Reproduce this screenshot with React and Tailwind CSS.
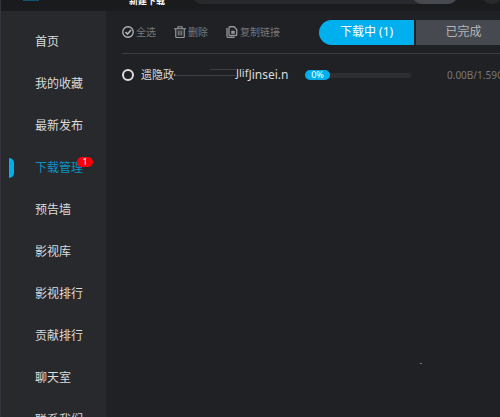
import { useState } from "react";

const menuItems = [
  "首页",
  "我的收藏",
  "最新发布",
  "下载管理",
  "预告墙",
  "影视库",
  "影视排行",
  "贡献排行",
  "聊天室",
  "联系我们",
];

const CheckIcon = () => (
  <svg className="w-3 h-3 shrink-0" viewBox="0 0 24 24" fill="none" stroke="currentColor" strokeWidth="2.6">
    <circle cx="12" cy="12" r="10.5" />
    <path d="M7 12l4 4 7-8" strokeWidth="3.2" />
  </svg>
);

const TrashIcon = () => (
  <svg className="w-3 h-3 shrink-0" viewBox="0 0 24 24" fill="none" stroke="currentColor" strokeWidth="2.4">
    <path d="M0 5.500h24M8 5V1.500h8V5M3.500 6v15q0 2 2 2h13q2 0 2-2V6" />
    <path d="M8.500 9v10M12 9v10M15.500 9v10" strokeWidth="1.800" />
  </svg>
);

const CopyIcon = () => (
  <svg className="w-3 h-3 shrink-0" viewBox="0 0 24 24" fill="none" stroke="currentColor" strokeWidth="2.6">
    <path d="M8 1.500h8l5.500 5.500v10q0 2-2 2H8q-2 0-2-2V3.500q0-2 2-2z" />
    <path d="M2 4v16q0 3 3 3h12" />
    <path d="M11 10h6v5h-6z" fill="currentColor" strokeWidth="1" />
  </svg>
);

const App = () => {
  const [activo, setActivo] = useState("下载管理");
  const [tab, setTab] = useState("downloading");
  const [checked, setChecked] = useState(false);
  const progress = 0;

  return (
    <div className="relative h-screen flex flex-col overflow-hidden bg-[#202124] border-l border-[#33343d] text-[#dcdcdc] font-['Noto_Sans','Noto_Sans_CJK_SC',sans-serif]">
      {/* Header */}
      <header className="h-[11px] shrink-0 flex items-end overflow-hidden bg-[#1a1b1d]">
        <span className="w-4 h-4 ml-[22px] mb-[10px] shrink-0 bg-[#11526e]" />
        <a
          href="#download"
          className="ml-[90px] mb-[5px] w-[34px] shrink-0 whitespace-nowrap text-[9px] leading-[10px] font-bold text-white"
        >
          新建下载
        </a>
        <div className="ml-7 mb-[7px] h-6 w-[268px] shrink-0 flex justify-end rounded-full bg-[#28292d]">
          <button aria-label="搜索" className="w-12 h-full rounded-full bg-[#474951]" />
        </div>
        <button aria-label="用户" className="ml-[21px] mb-[7px] w-6 h-6 shrink-0 rounded-full bg-[#28292d]" />
      </header>

      <div className="flex flex-1 min-h-0">
        {/* Menu lateral */}
        <nav className="w-[105px] shrink-0 pt-[10px] bg-[#28292d] overflow-hidden">
          {menuItems.map((item) => (
            <a
              key={item}
              href="#menu"
              onClick={() => setActivo(item)}
              className={`h-[42px] pl-2 flex items-center text-xs leading-4 ${
                activo === item ? "text-[#0a93c4]" : "text-[#dcdcdc]"
              }`}
            >
              <span
                className={`w-[5px] h-5 mr-[21px] rounded-r-md ${
                  activo === item ? "bg-[#00b0ee]" : ""
                }`}
              />
              <span className="relative whitespace-nowrap">
                {item}
                {item === "下载管理" && (
                  <span className="absolute -top-[3px] -right-[10px] w-4 h-[10px] rounded-full bg-[#f80008] text-white text-[9px] leading-[10px] text-center">
                    1
                  </span>
                )}
              </span>
            </a>
          ))}
        </nav>

        {/* Descargas */}
        <main className="flex-1 min-w-0 pl-4 overflow-hidden">
          <div className="h-[43px] flex items-center border-b border-[#3b3c40] whitespace-nowrap text-[10px] leading-4 text-[#77787a]">
            <button className="w-[52px] shrink-0 flex items-center gap-0.5">
              <span className="text-[#b4b5b7]"><CheckIcon /></span>
              全选
            </button>
            <button className="w-[52px] shrink-0 flex items-center gap-0.5">
              <span className="text-[#97989a]"><TrashIcon /></span>
              删除
            </button>
            <button className="w-[93px] shrink-0 flex items-center gap-0.5">
              <span className="text-[#97989a]"><CopyIcon /></span>
              复制链接
            </button>
            <div className="flex shrink-0 gap-0.5 text-xs">
              <button
                onClick={() => setTab("downloading")}
                className={`w-[95px] h-[25px] rounded-l-full ${
                  tab === "downloading" ? "bg-[#00b0ee] text-white" : "bg-[#474951] text-[#b5b6b9]"
                }`}
              >
                下载中 (1)
              </button>
              <button
                onClick={() => setTab("completed")}
                className={`w-[95px] h-[25px] rounded-r-full ${
                  tab === "completed" ? "bg-[#00b0ee] text-white" : "bg-[#474951] text-[#b5b6b9]"
                }`}
              >
                已完成
              </button>
            </div>
          </div>

          <div className="h-[42px] flex items-center whitespace-nowrap">
            <input
              id="task-1"
              type="checkbox"
              checked={checked}
              onChange={() => setChecked(!checked)}
              className="appearance-none w-3 h-3 shrink-0 rounded-full border-2 border-[#dcdcdc] checked:bg-[#00b0ee]"
            />
            <label htmlFor="task-1" className="ml-[7px] w-[164px] shrink-0 flex items-center text-xs leading-4 overflow-hidden">
              <span className="text-[11px]">遗隐政</span>
              <svg className="w-[62px] h-4 shrink-0" viewBox="0 0 62 16" fill="none" stroke="#3f4044">
                <path d="M-2 5l4 3-4 3z" fill="#8b8c8e" stroke="none" />
                <path d="M2 8.500h60M36 2.500h26" />
              </svg>
              <span className="pb-1 text-[11px]">Jlif</span>
              <span>Jinsei.n</span>
            </label>

            {/* Barra de progreso */}
            <div className="w-[106px] h-[5px] shrink-0 flex items-center rounded-full bg-[#2d2e31]">
              <div
                className="min-w-[25px] h-[10px] rounded-full bg-[#00b0ee] text-white text-[9px] leading-[10px] text-center"
                style={{ width: `${progress}%` }}
              >
                {progress}%
              </div>
            </div>
            <span className="ml-9 shrink-0 text-[10px] leading-4 text-[#77787a]">0.00B/1.59GB</span>
          </div>
        </main>
      </div>

      <span className="absolute left-[84%] top-[87%] w-0.5 h-px bg-[#77787a]" />
    </div>
  );
};

export default App;
